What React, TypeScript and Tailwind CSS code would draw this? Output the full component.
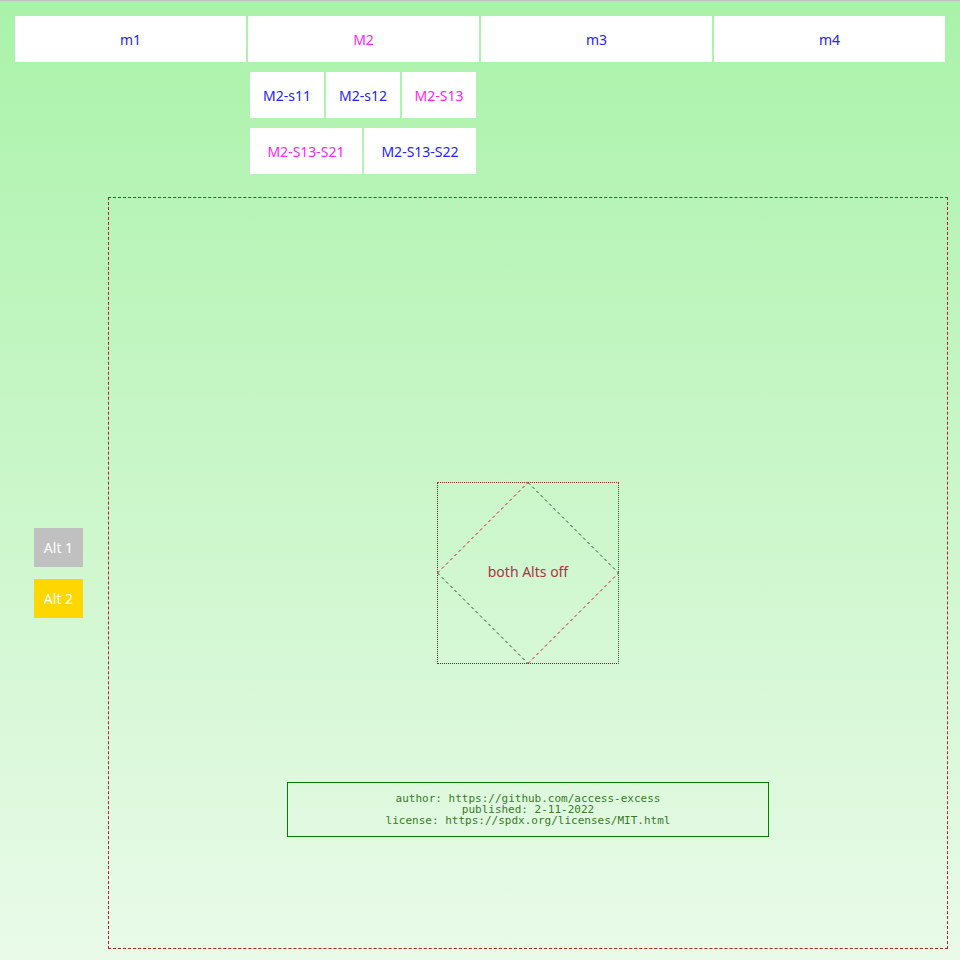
import React from "react";

export default function App() {
  const menu = [
    { t: "m1", c: "text-[#2222ff]" },
    { t: "M2", c: "text-[#ff22ff]" },
    { t: "m3", c: "text-[#2222ff]" },
    { t: "m4", c: "text-[#2222ff]" },
  ];
  const sub1 = [
    { t: "M2-s11", c: "text-[#2222ff]" },
    { t: "M2-s12", c: "text-[#2222ff]" },
    { t: "M2-S13", c: "text-[#ff22ff]" },
  ];
  const sub2 = [
    { t: "M2-S13-S21", c: "text-[#ff22ff]" },
    { t: "M2-S13-S22", c: "text-[#2222ff]" },
  ];
  return (
    <div className="min-h-[960px] w-full border-t border-[#c0c0c0] bg-gradient-to-b from-[#a9f2a9] to-[#e9fae9] font-['Noto_Sans',sans-serif] text-[14px]">
      <div className="ml-[15px] mt-[15px] flex gap-[2px]">
        {menu.map((m) => (
          <div key={m.t} className={`flex h-[46px] w-[231px] items-center justify-center bg-white ${m.c}`}>
            {m.t}
          </div>
        ))}
      </div>
      <div className="ml-[250px] mt-[10px] flex gap-[2px]">
        {sub1.map((m) => (
          <div key={m.t} className={`flex h-[46px] w-[74px] items-center justify-center bg-white ${m.c}`}>
            {m.t}
          </div>
        ))}
      </div>
      <div className="ml-[250px] mt-[10px] flex gap-[2px]">
        {sub2.map((m) => (
          <div key={m.t} className={`flex h-[46px] w-[112px] items-center justify-center bg-white ${m.c}`}>
            {m.t}
          </div>
        ))}
      </div>
      <div className="mt-[23px] flex">
        <div className="flex w-[108px] flex-col items-start justify-center gap-[12px] pl-[34px]">
          <div className="flex h-[39px] w-[49px] items-center justify-center bg-[#c0c0c0] text-white">Alt 1</div>
          <div className="flex h-[39px] w-[49px] items-center justify-center bg-[#ffd700] text-white">Alt 2</div>
        </div>
        <div className="grid h-[752px] w-[840px] grid-cols-1 grid-rows-1 border border-dashed border-[#b22222]">
          <div className="relative col-start-1 row-start-1 flex h-[182px] w-[182px] items-center justify-center self-center justify-self-center border border-dotted border-t-[#c8102e] border-r-[#c8102e] border-b-[#5a2a22] border-l-[#5a2a22]">
            <svg className="absolute left-[-1px] top-[-1px]" width="182" height="182" viewBox="0 0 182 182">
              <line x1="0.5" y1="91" x2="91" y2="0.5" stroke="#c8102e" strokeWidth="1" strokeDasharray="3 3" />
              <line x1="91" y1="0.5" x2="181.5" y2="91" stroke="#1f4f1f" strokeWidth="1" strokeDasharray="3 3" />
              <line x1="0.5" y1="91" x2="91" y2="181.5" stroke="#1f4f1f" strokeWidth="1" strokeDasharray="3 3" />
              <line x1="91" y1="181.5" x2="181.5" y2="91" stroke="#c8102e" strokeWidth="1" strokeDasharray="3 3" />
            </svg>
            <span className="relative -translate-y-[2px] text-[#b03048]">both Alts off</span>
          </div>
          <div className="col-start-1 row-start-1 mb-[111px] flex h-[55px] w-[482px] flex-col items-center justify-center self-end justify-self-center border border-[#008000] font-['DejaVu_Sans_Mono',monospace] text-[11px] leading-[11px] text-[#3a7a2a]">
            <div>author: https://github.com/access-excess</div>
            <div>published: 2-11-2022</div>
            <div>license: https://spdx.org/licenses/MIT.html</div>
          </div>
        </div>
      </div>
    </div>
  );
}
